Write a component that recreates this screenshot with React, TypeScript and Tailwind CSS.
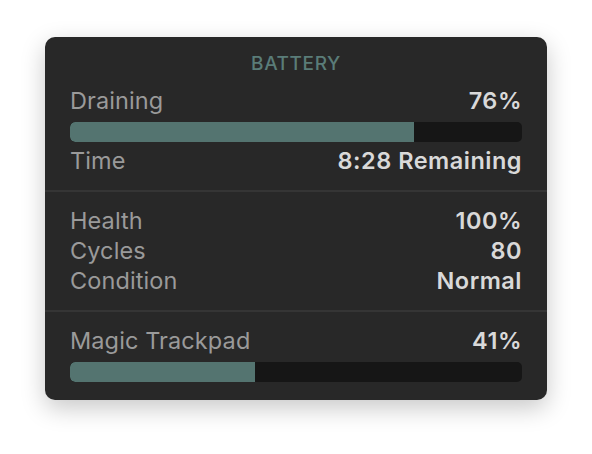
import React from "react";

const Row = ({ label, value, className = "" }: { label: string; value: string; className?: string }) => (
  <div className={`flex justify-between items-center text-[23.5px] leading-[30px] ${className}`}>
    <span className="text-[#9a9a9a] tracking-[0.1px]">{label}</span>
    <span className="font-semibold text-[#d9d9d9] tracking-[0.5px]">{value}</span>
  </div>
);

const Bar = ({ pct, className = "" }: { pct: number; className?: string }) => (
  <div className={`h-[20px] rounded-[5px] bg-[#161616] overflow-hidden ${className}`}>
    <div className="h-full bg-[#547470] rounded-l-[5px]" style={{ width: `${pct}%` }} />
  </div>
);

export default function App() {
  return (
    <div className="min-h-screen bg-white flex justify-center pt-[37px]" style={{ fontFamily: "Inter, 'Noto Sans', sans-serif" }}>
      <div className="w-[502px] h-[363px] rounded-[10px] bg-[#282828] shadow-[0_8px_24px_rgba(0,0,0,0.22)] flex flex-col pt-[17px] px-[25px]">
        <div className="text-center text-[19px] leading-[20px] font-medium text-[#5a7c78] tracking-[0.6px]">BATTERY</div>
        <Row label="Draining" value="76%" className="mt-[12px]" />
        <Bar pct={76} className="mt-[6px]" />
        <Row label="Time" value="8:28 Remaining" className="mt-[4px]" />
        <div className="-mx-[25px] mt-[14px] h-[2px] bg-[#353535]" />
        <Row label="Health" value="100%" className="mt-[14px]" />
        <Row label="Cycles" value="80" />
        <Row label="Condition" value="Normal" />
        <div className="-mx-[25px] mt-[14px] h-[2px] bg-[#353535]" />
        <Row label="Magic Trackpad" value="41%" className="mt-[14px]" />
        <Bar pct={41} className="mt-[6px]" />
      </div>
    </div>
  );
}
